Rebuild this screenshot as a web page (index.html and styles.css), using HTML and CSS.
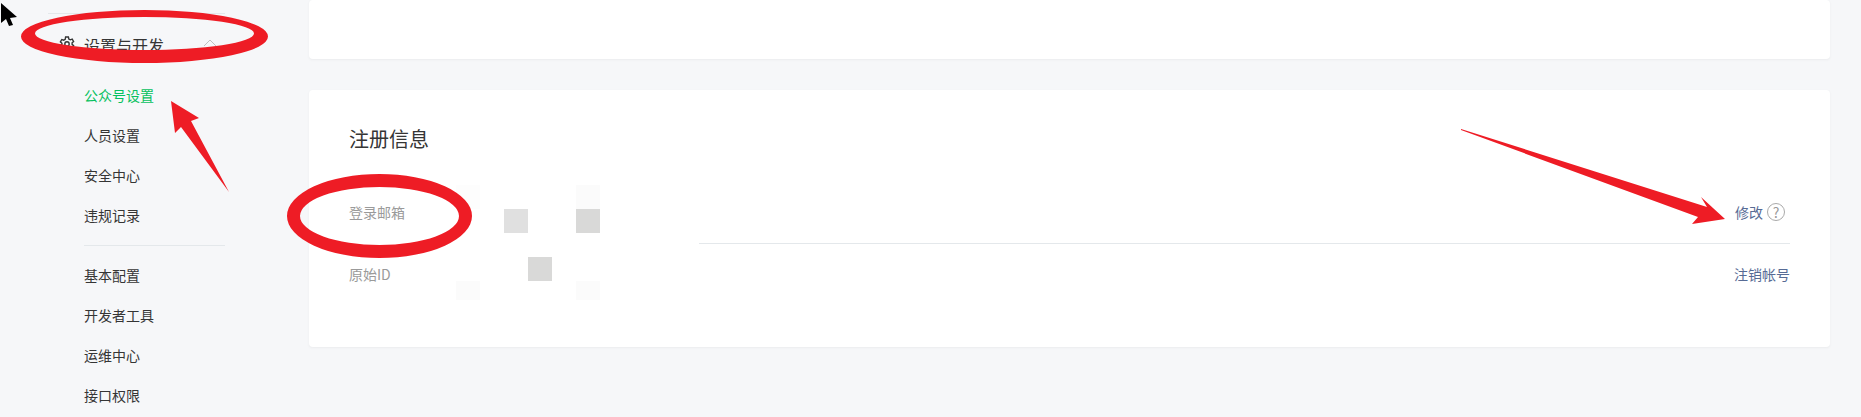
FILE: index.html
```html
<!DOCTYPE html>
<html lang="zh-CN">
	<head>
		<title>公众号设置</title>
		<meta name="viewport" content="width=device-width, initial-scale=1" />
		<link rel="stylesheet" href="styles.css">
	</head>
	<body>
		<div class="page">
			<nav class="side">
				<div class="side-head">
					<svg class="gear" width="16" height="16" viewBox="0 0 16 16">
						<path d="M6.600 1h2.800l.4 2 1.500.8 1.900-.7 1.400 2.400-1.500 1.300v1.600l1.500 1.300-1.400 2.400-1.900-.7-1.500.8-.4 2H6.600l-.4-2-1.500-.8-1.900.7-1.400-2.400 1.500-1.300V7.200L1.400 5.900l1.400-2.400 1.900.7 1.500-.8z" />
						<circle cx="8" cy="8" r="2.200" />
					</svg>
					<span class="side-title">设置与开发</span>
					<svg class="chevron" width="14" height="8" viewBox="0 0 14 8">
						<path d="M1 7l6-6 6 6" />
					</svg>
				</div>
				<ul class="menu">
					<li class="active">公众号设置</li>
					<li>人员设置</li>
					<li>安全中心</li>
					<li>违规记录</li>
				</ul>
				<ul class="menu menu-split">
					<li>基本配置</li>
					<li>开发者工具</li>
					<li>运维中心</li>
					<li>接口权限</li>
				</ul>
			</nav>
			<main class="content">
				<section class="card card-top"></section>
				<section class="card card-info">
					<h2>注册信息</h2>
					<div class="row row-first">
						<span class="label">登录邮箱</span>
						<span class="actions">
							<a>修改</a>
							<span class="help">?</span>
						</span>
					</div>
					<div class="row">
						<span class="label">原始ID</span>
						<span class="actions"><a>注销帐号</a></span>
					</div>
				</section>
			</main>
		</div>
		<!-- markup painted on top of the screenshot: mosaic, rings, arrows, cursor -->
		<svg class="marks" width="1861" height="417" viewBox="0 0 1861 417">
			<rect x="340" y="233" width="359" height="24" fill="#fff" />
			<rect x="456" y="185" width="24" height="24" fill="#fdfdfd" />
			<rect x="576" y="185" width="24" height="24" fill="#fbfbfb" />
			<rect x="504" y="209" width="24" height="24" fill="#e0e0e0" />
			<rect x="576" y="209" width="24" height="24" fill="#d9d9d8" />
			<rect x="528" y="257" width="24" height="24" fill="#d9d9d8" />
			<rect x="456" y="281" width="24" height="19" fill="#fbfbfb" />
			<rect x="576" y="281" width="24" height="19" fill="#fbfbfb" />
			<g fill="#ee1c25" fill-rule="evenodd">
				<path d="M21 36.500a123.500 26.500 0 1 0 247 0a123.500 26.500 0 1 0 -247 0zM35 33.500a109.500 16.500 0 1 1 219 0a109.500 16.500 0 1 1 -219 0z" />
				<path d="M287 216a92.500 42 0 1 0 185 0a92.500 42 0 1 0 -185 0zM300 216a79.500 29 0 1 1 159 0a79.500 29 0 1 1 -159 0z" />
				<polygon points="171,101 199,118 191,121 229,192 181,127 175,133" />
				<polygon points="1461,129 1707,207 1701,197 1725,219 1692,224 1698,217 1461,130" />
			</g>
			<polygon points="1,3 17,17 10,18 13,25 9,26 6,19 1,23" fill="#000" />
		</svg>
	</body>
</html>
```
FILE: styles.css
```css
html,
body {
	height: 417px;
	margin: 0;
	overflow: hidden;
}

body {
	background: #f6f7f9;
	color: #353535;
	font-family: "Noto Sans CJK SC", "Liberation Sans", sans-serif;
	font-size: 14px;
	position: relative;
}

.page {
	display: flex;
}

.side {
	box-sizing: border-box;
	flex: none;
	padding: 13px 0 0 48px;
	width: 309px;
}

.side-head {
	align-items: center;
	border-top: 1px solid #e4e8eb;
	display: flex;
	height: 60px;
	padding-top: 1px;
	width: 177px;
}

.gear {
	fill: none;
	margin: 0 9px 2px 11px;
	stroke: #353535;
	stroke-width: 1.4;
}

.side-title {
	font-size: 16px;
	width: 119px;
}

.chevron {
	fill: none;
	margin-bottom: 4px;
	stroke: #c0c0c0;
}

.menu {
	list-style: none;
	margin: 0 0 0 36px;
	padding: 0;
	width: 141px;
}

.menu li {
	line-height: 40px;
}

.menu .active {
	color: #07c160;
}

.menu-split {
	border-top: 1px solid #e4e8eb;
	margin-top: 10px;
	padding-top: 9px;
}

.content {
	flex: none;
	width: 1521px;
}

.card {
	background: #ffffff;
	border-radius: 4px;
	box-shadow: 0 1px 2px rgba(150, 150, 150, 0.1);
}

.card-top {
	height: 59px;
	margin-bottom: 31px;
}

.card-info {
	box-sizing: border-box;
	height: 257px;
	padding: 35px 40px 0 40px;
}

.card-info h2 {
	font-size: 20px;
	font-weight: 400;
	line-height: 28px;
	margin: 0 0 27px 0;
}

.row {
	align-items: center;
	display: flex;
	height: 60px;
	justify-content: space-between;
}

.row-first {
	border-bottom: 1px solid #e4e8eb;
	height: 63px;
}

.label {
	color: #9a9a9a;
}

.actions {
	align-items: center;
	display: flex;
}

.actions a {
	color: #576b95;
}

.help {
	border: 1px solid #aaaaaa;
	border-radius: 50%;
	color: #999999;
	font-size: 14px;
	height: 16px;
	line-height: 16px;
	margin: 0 5px 0 4px;
	text-align: center;
	width: 16px;
}

.marks {
	left: 0;
	pointer-events: none;
	position: absolute;
	top: 0;
}
```
